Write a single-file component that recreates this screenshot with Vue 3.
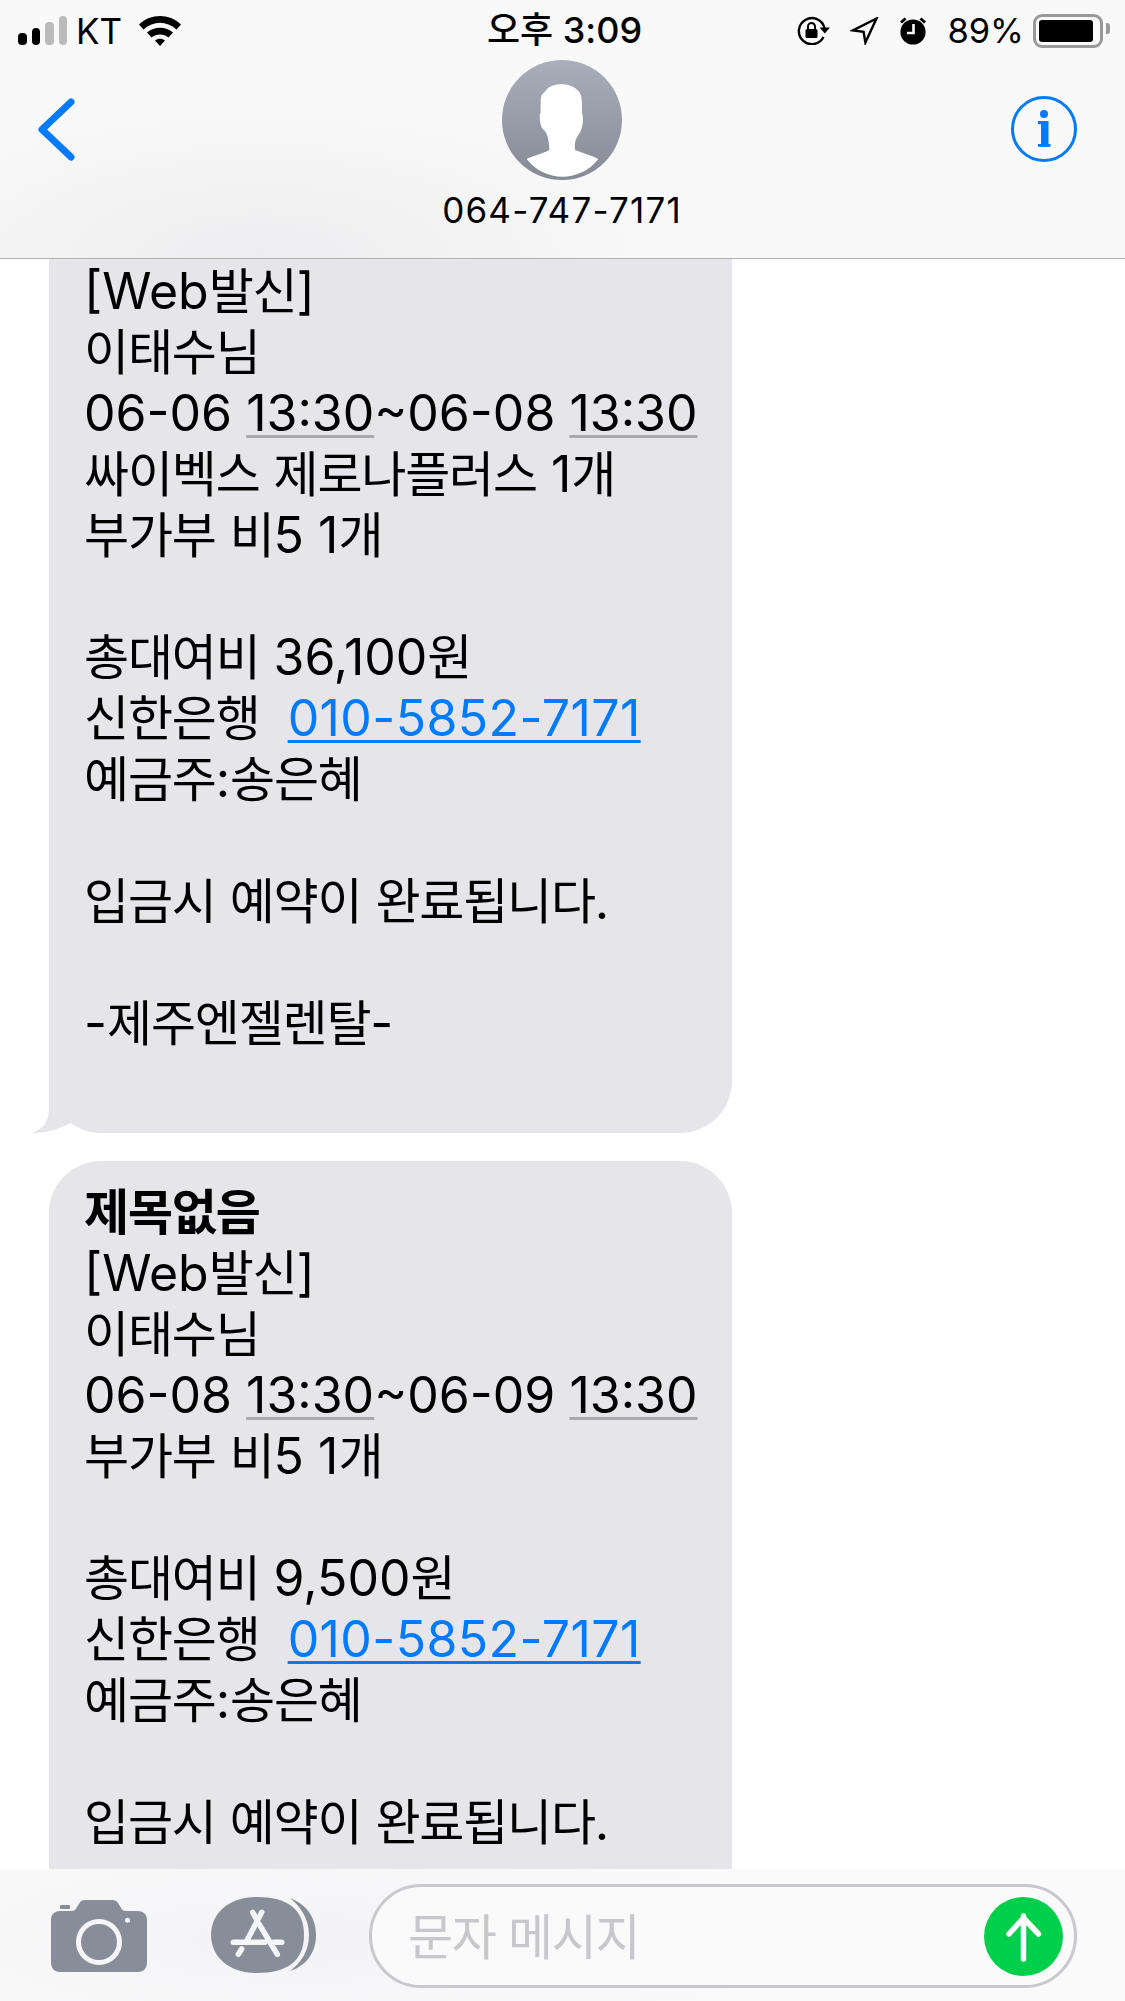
<script setup>
const msgs = [
  {
    id: 1,
    lines: [
      [],
      [['[Web발신]']],
      [['이태수님']],
      [['06-06 '], ['13:30', 'time'], ['~06-08 '], ['13:30', 'time']],
      [['싸이벡스 제로나플러스 1개']],
      [['부가부 비5 1개']],
      [],
      [['총대여비 36,100원']],
      [['신한은행  '], ['010-5852-7171', 'link']],
      [['예금주:송은혜']],
      [],
      [['입금시 예약이 완료됩니다.']],
      [],
      [['-제주엔젤렌탈-']],
      []
    ]
  },
  {
    id: 2,
    lines: [
      [['제목없음', 'bold']],
      [['[Web발신]']],
      [['이태수님']],
      [['06-08 '], ['13:30', 'time'], ['~06-09 '], ['13:30', 'time']],
      [['부가부 비5 1개']],
      [],
      [['총대여비 9,500원']],
      [['신한은행  '], ['010-5852-7171', 'link']],
      [['예금주:송은혜']],
      [],
      [['입금시 예약이 완료됩니다.']],
      [],
      []
    ]
  }
]

// hangul is set a bit tighter than latin, so split each piece into runs
const runs = (text) => text.match(/[\uac00-\ud7a3]+|[^\uac00-\ud7a3]+/g).map((t) => ({
  t,
  ko: /[\uac00-\ud7a3]/.test(t)
}))
</script>

<template>
  <div class="screen">
    <header class="top">
      <div class="status">
        <div class="status-left">
          <div class="signal">
            <i class="b1"></i><i class="b2"></i><i class="b3 off"></i><i class="b4 off"></i>
          </div>
          <span class="carrier">KT</span>
          <svg width="42" height="30" viewBox="0 0 42 30">
            <path d="M0 8.5C12-2.8 30-2.8 42 8.5L37.5 13.5C27.5 4.5 14.5 4.5 4.5 13.5Z" />
            <path d="M8 16.5C15 10 27 10 34 16.5L29.5 21.5C25 17.5 17 17.5 12.5 21.5Z" />
            <path d="M16 24.5C19 22 23 22 26 24.5L21 30Z" />
          </svg>
        </div>
        <div class="clock">오후 3:09</div>
        <div class="status-right">
          <svg width="33" height="29" viewBox="0 0 33 29">
            <path d="M26.5 21A13 13 0 1 1 27.5 12" fill="none" stroke="#000" stroke-width="2.4" />
            <path d="M22.5 11.5H33L27.8 17.5Z" />
            <rect x="8.5" y="13" width="12" height="9" rx="1.5" />
            <path d="M11 13V10.5A3.4 3.4 0 0 1 18 10.5V13" fill="none" stroke="#000" stroke-width="2" />
          </svg>
          <svg width="29" height="28" viewBox="0 0 29 28">
            <path d="M26.5 1.5L2.8 13.4L13.6 14.8L15.4 25.5Z" fill="none" stroke="#000" stroke-width="2.4" stroke-linejoin="miter" />
          </svg>
          <svg width="28" height="29" viewBox="0 0 28 29">
            <circle cx="14" cy="16" r="12.6" />
            <path d="M14.5 8V17H8" fill="none" stroke="#f9f9f9" stroke-width="2.6" />
            <path d="M1 5.5L5.5 1.5L7.5 3.5L3 7.5Z" />
            <path d="M27 5.5L22.5 1.5L20.5 3.5L25 7.5Z" />
          </svg>
          <span class="pct">89%</span>
          <div class="battery"><div class="level"></div><i class="nub"></i></div>
        </div>
      </div>

      <div class="nav">
        <div class="nav-left">
          <svg width="37" height="63" viewBox="0 0 37 63">
            <path d="M33 4L4 31.5L33 59" fill="none" stroke="#007aff" stroke-width="7" stroke-linecap="round" stroke-linejoin="round" />
          </svg>
        </div>
        <div class="contact">
          <svg class="avatar" width="120" height="120" viewBox="0 0 120 120">
            <defs>
              <linearGradient id="ava" x1="0" y1="0" x2="0" y2="1">
                <stop offset="0" stop-color="#a9aebb" />
                <stop offset="1" stop-color="#858a95" />
              </linearGradient>
            </defs>
            <circle cx="60" cy="60" r="60" fill="url(#ava)" />
            <path fill="#fff" d="M58 24.3C50 24.5 45 28 43 31.7C39.5 34 38.7 37 38.7 40C38.5 45 38.8 50 38.5 53L37.8 55C37.6 60 38.4 65 40 68C41.5 70 44.5 71 46 78C46.6 82 47.5 86 47.3 90C40 94 31 95.5 24.7 99A45 45 0 0 0 96.3 99C89 95 80 93 73 90C72.5 86 73 82 74 79.3C76 75 79 72 79.7 68C81 64 81.2 60 80.7 55L80 53C80 49 80.2 44 79.7 40C79.5 35 78 32 75.3 30C71 26 66 24.2 58 24.3Z" />
          </svg>
          <div class="phone">064-747-7171</div>
        </div>
        <div class="nav-right">
          <svg width="66" height="66" viewBox="0 0 66 66" fill="#007aff">
            <circle cx="33" cy="33" r="31.5" fill="none" stroke="#007aff" stroke-width="3" />
            <circle cx="33" cy="18" r="4" />
            <rect x="30" y="25" width="7.5" height="25.7" />
            <rect x="27" y="25" width="4" height="3.2" />
            <rect x="27" y="48" width="12.5" height="2.8" />
          </svg>
        </div>
      </div>
    </header>

    <main class="thread">
      <div v-for="(m, i) in msgs" :key="m.id" class="bubble">
        <div v-for="(line, n) in m.lines" :key="n" class="line">
          <span v-for="(seg, k) in line" :key="k" :class="seg[1]">
            <span v-for="(r, j) in runs(seg[0])" :key="j" :class="{ ko: r.ko }">{{ r.t }}</span>
          </span>
        </div>
        <svg v-if="i === 0" class="tail" width="40" height="60" viewBox="0 0 40 60">
          <path d="M18 0V34C18 48 12 57 0 60C14 60 27 57 39 50V0Z" fill="#e5e5ea" />
        </svg>
      </div>
    </main>

    <footer class="composer">
      <svg width="96" height="73" viewBox="0 0 96 73">
        <path fill="#878e99" d="M9 12H20C23 12 24.500 11 26 8L28.500 4C30 1.800 31.500 1 34 1H61C64 1 66 2 67 4L69.500 8C71 11 72.500 12 75 12H87C92.500 12 96 15.500 96 21V63C96 69.500 92.500 73 87 73H9C3.500 73 0 69.500 0 63V21C0 15.500 3.500 12 9 12Z" />
        <rect x="9" y="6" width="10" height="4" rx="1" fill="#878e99" />
        <ellipse cx="48" cy="43" rx="20.500" ry="20.500" fill="none" stroke="#f6f6f8" stroke-width="5" />
        <circle cx="76.500" cy="21.300" r="2.500" fill="#f6f6f8" />
      </svg>
      <svg class="apps" width="105" height="80" viewBox="0 0 105 80">
        <path fill="#878e99" d="M46 2C76 2 93 14 93 40C93 66 76 78 46 78C18 78 0 62 0 40C0 18 18 2 46 2Z" />
        <path fill="#878e99" d="M79 3C97 10 105 24 105 40C105 56 97 70 79 76C90 68 98 56 98 40C98 24 90 12 79 3Z" />
        <g fill="none" stroke="#f4f5f6" stroke-width="5.500" stroke-linecap="round">
          <path d="M50.700 17.300L35.700 46" />
          <path d="M30.700 54L27.300 59.300" />
          <path d="M41.700 17.300L45 23.300" />
          <path d="M48.300 29.300L66.300 59.300" />
          <path d="M22.300 47.300H54" />
          <path d="M62.300 47.300H70.700" />
        </g>
      </svg>
      <div class="input">
        <span class="placeholder">문자 메시지</span>
        <div class="send">
          <svg width="79" height="79" viewBox="0 0 79 79">
            <path d="M39.500 62V19M25 37L39.500 21L54.500 37" fill="none" stroke="#fff" stroke-width="5.500" stroke-linecap="round" stroke-linejoin="round" />
          </svg>
        </div>
      </div>
    </footer>
  </div>
</template>

<style scoped>
.screen {
  width: 1125px;
  height: 2001px;
  display: flex;
  flex-direction: column;
  overflow: hidden;
  background: #fff;
  color: #000;
  font-family: Inter, "Noto Sans CJK KR", sans-serif;
}

.top {
  height: 259px;
  flex: none;
  box-sizing: border-box;
  border-bottom: 1px solid #b2b2b2;
  background: radial-gradient(ellipse 420px 160px at 260px 259px, #ededef, rgba(237, 237, 239, 0)), #f9f9f9;
}

.status {
  height: 60px;
  padding: 0 22px 0 18px;
  display: grid;
  grid-template-columns: 1fr auto 1fr;
  align-items: center;
  font-size: 36px;
  line-height: 60px;
}

.status-left,
.status-right {
  display: flex;
  align-items: center;
}

.status-left {
  gap: 9px;
}

.status-left svg {
  margin-left: 8px;
}

.status-right {
  justify-content: flex-end;
  gap: 20px;
}

.signal {
  display: flex;
  align-items: flex-end;
  gap: 5px;
  height: 29px;
}

.signal i {
  display: block;
  width: 8.500px;
  border-radius: 4px;
  background: #000;
}

.signal .off {
  background: #bababa;
}

.b1 { height: 12px; }
.b2 { height: 17px; }
.b3 { height: 23px; }
.b4 { height: 29px; }

.carrier {
  margin-top: 1px;
  font-size: 35px;
}

.clock {
  margin-top: -1px;
  padding-left: 8px;
  font-weight: 500;
  font-size: 36px;
}

.pct {
  margin-right: -11px;
  font-size: 34.500px;
}

.battery {
  position: relative;
  box-sizing: border-box;
  width: 70px;
  height: 34px;
  padding: 3px;
  border: 3px solid #999;
  border-radius: 9px;
}

.level {
  width: 54px;
  height: 22px;
  background: #000;
  border-radius: 3px;
}

.nub {
  position: absolute;
  right: -10px;
  top: 6px;
  width: 4px;
  height: 11px;
  background: #999;
  border-radius: 0 3px 3px 0;
}

.nav {
  display: grid;
  grid-template-columns: 1fr auto 1fr;
  padding-right: 1px;
}

.nav-left {
  padding: 38px 0 0 38px;
}

.nav-right {
  padding: 36px 47px 0 0;
  display: flex;
  justify-content: flex-end;
  align-items: flex-start;
}

.contact {
  display: flex;
  flex-direction: column;
  align-items: center;
}

.avatar {
  display: block;
}

.phone {
  margin-top: 8px;
  line-height: 44px;
  font-size: 35px;
  letter-spacing: 1.200px;
}

.thread {
  flex: 1;
  min-height: 0;
  overflow: hidden;
  padding-left: 49px;
  display: flex;
  flex-direction: column;
  gap: 28px;
}

.bubble {
  position: relative;
  flex: none;
  box-sizing: border-box;
  width: 683px;
  padding: 21px 20px 18px 35px;
  border-radius: 52px;
  background: #e5e5ea;
  font-size: 50px;
}

.bubble:first-child {
  margin-top: -80px;
}

.line {
  height: 61px;
  line-height: 61px;
  white-space: pre;
}

.ko {
  font-size: 49px;
  letter-spacing: -1.200px;
}

.bold {
  font-weight: 700;
}

.time {
  text-decoration: underline;
  text-decoration-color: #a9a9ad;
  text-decoration-thickness: 3px;
  text-underline-offset: 4px;
}

.link {
  color: #007aff;
  letter-spacing: 0.400px;
  text-decoration: underline;
  text-decoration-thickness: 3px;
  text-underline-offset: 4px;
}

.tail {
  position: absolute;
  left: -18px;
  bottom: 0;
}

.composer {
  height: 132px;
  flex: none;
  box-sizing: border-box;
  padding: 0 48px 0 51px;
  display: flex;
  align-items: center;
  gap: 64px;
  background: radial-gradient(ellipse 500px 120px at 300px 70px, #f3f3f5, rgba(243, 243, 245, 0)), #fafafb;
}

.apps {
  margin-right: -11px;
}

.input {
  flex: 1;
  box-sizing: border-box;
  height: 104px;
  margin-top: 2px;
  padding: 0 11px 0 36px;
  display: flex;
  align-items: center;
  justify-content: space-between;
  border: 3px solid #c8c8cd;
  border-radius: 52px;
  background: #fafafb;
}

.placeholder {
  margin-top: -6px;
  color: #c7c7cc;
  font-size: 49px;
  letter-spacing: -1.300px;
}

.send {
  width: 79px;
  height: 79px;
  border-radius: 50%;
  background: #00cf4b;
}

.send svg {
  display: block;
}

svg {
  flex: none;
}
</style>
